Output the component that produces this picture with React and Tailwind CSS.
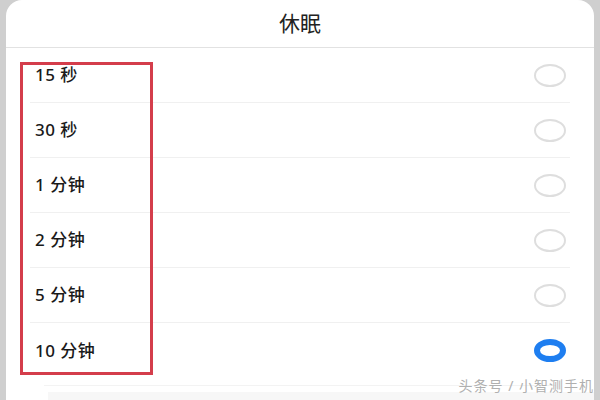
import React from 'react';

const options = [
  { label: '15 秒', checked: false },
  { label: '30 秒', checked: false },
  { label: '1 分钟', checked: false },
  { label: '2 分钟', checked: false },
  { label: '5 分钟', checked: false },
  { label: '10 分钟', checked: true },
];

export default function App() {
  return (
    <div
      className="relative w-[600px] h-[400px] overflow-hidden bg-[#cfcfcf] flex pl-[6px] pr-[6px]"
      style={{ fontFamily: '"Noto Sans", "Noto Sans CJK SC", sans-serif' }}
    >
      <div className="flex-1 bg-white rounded-t-[16px] flex flex-col">
        {/* Title */}
        <div className="h-[48px] shrink-0 flex items-center justify-center border-b border-[#e2e2e2]">
          <span className="text-[21px] text-[#222]">休眠</span>
        </div>

        {/* Options */}
        <div className="mx-[24px] flex flex-col">
          {options.map((o, i) => (
            <div
              key={i}
              className={`h-[55px] flex items-center justify-between pl-[5px] pr-[4px] ${i < options.length - 1 ? 'border-b border-[#f0f0f0]' : ''}`}
            >
              <span className="text-[17px] font-medium text-[#1a1a1a] tracking-[0.5px]">{o.label}</span>
              {o.checked ? (
                <span className="w-[32px] h-[23px] rounded-[50%] border-[6px] border-[#1e7ef0] bg-white" />
              ) : (
                <span className="w-[32px] h-[23px] rounded-[50%] border-[2px] border-[#dedede] bg-white" />
              )}
            </div>
          ))}
        </div>

        {/* Bottom hint of next block */}
        <div className="mt-[7px] mx-[38px] border-t border-[#f3f3f3] flex-1 bg-white" />
        <div className="h-[8px] ml-[42px] bg-[#f7f7f7]" />
      </div>

      {/* Red highlight box */}
      <div className="absolute left-[20px] top-[62px] w-[133px] h-[313px] border-[3px] border-[#d43d4b]" />

      {/* Watermark */}
      <div className="absolute right-[6px] bottom-[4px] text-[14px] text-[#b0b0b0] tracking-[1px]">头条号 / 小智测手机</div>
    </div>
  );
}
